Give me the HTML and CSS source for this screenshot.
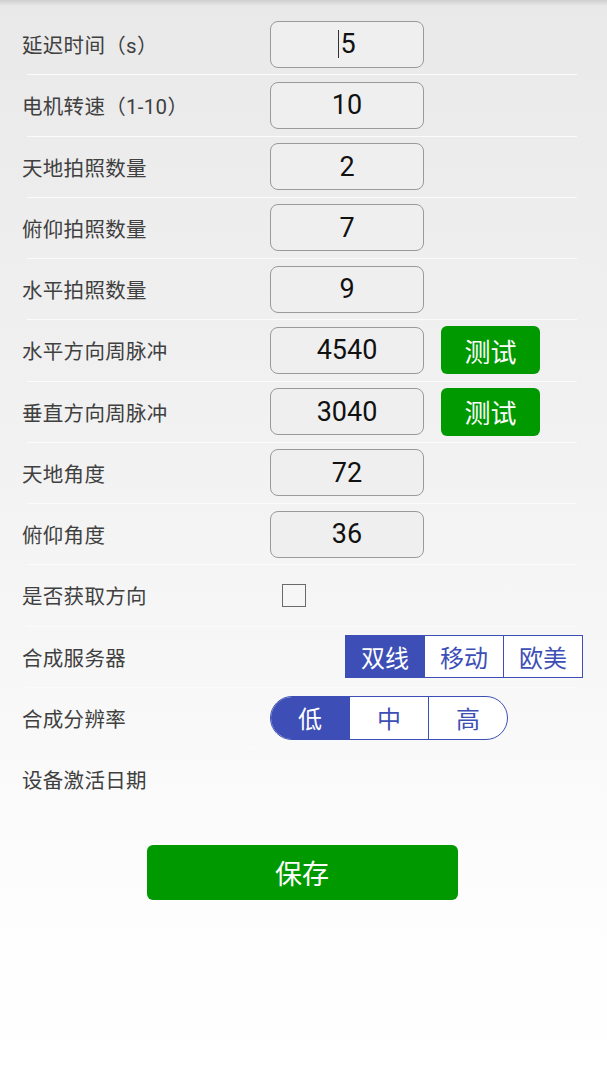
FILE: index.html
```html
<!DOCTYPE html>
<html lang="zh-CN">
<head>
  <meta charset="UTF-8">
  <title>参数设置</title>
  <link rel="stylesheet" href="styles.css">
</head>
<body>
  <div class="top-shadow"></div>

  <!-- 参数列表 -->
  <div class="form">
    <div class="row">
      <span class="label">延迟时间（s）</span>
      <div class="field"><span class="caret"></span>5</div>
    </div>
    <div class="row">
      <span class="label">电机转速（1-10）</span>
      <div class="field">10</div>
    </div>
    <div class="row">
      <span class="label">天地拍照数量</span>
      <div class="field">2</div>
    </div>
    <div class="row">
      <span class="label">俯仰拍照数量</span>
      <div class="field">7</div>
    </div>
    <div class="row">
      <span class="label">水平拍照数量</span>
      <div class="field">9</div>
    </div>
    <div class="row">
      <span class="label">水平方向周脉冲</span>
      <div class="field">4540</div>
      <button class="test-btn">测试</button>
    </div>
    <div class="row">
      <span class="label">垂直方向周脉冲</span>
      <div class="field">3040</div>
      <button class="test-btn">测试</button>
    </div>
    <div class="row">
      <span class="label">天地角度</span>
      <div class="field">72</div>
    </div>
    <div class="row">
      <span class="label">俯仰角度</span>
      <div class="field">36</div>
    </div>
    <div class="row">
      <span class="label">是否获取方向</span>
      <span class="checkbox"></span>
    </div>
    <div class="row">
      <span class="label">合成服务器</span>
      <div class="segmented server">
        <span class="seg active">双线</span>
        <span class="seg">移动</span>
        <span class="seg">欧美</span>
      </div>
    </div>
    <div class="row">
      <span class="label">合成分辨率</span>
      <div class="segmented pill">
        <span class="seg active">低</span>
        <span class="seg">中</span>
        <span class="seg">高</span>
      </div>
    </div>
    <div class="row">
      <span class="label">设备激活日期</span>
    </div>
  </div>

  <div class="actions">
    <button class="save-btn">保存</button>
  </div>
</body>
</html>
```

FILE: styles.css
```css
body {
  margin: 0;
  min-height: 1080px;
  background: linear-gradient(#e9e9e9 0, #f3f3f3 500px, #fdfdfd 900px, #fff 1080px);
  font-family: Roboto, "Noto Sans CJK SC", sans-serif;
  color: #3a3a3a;
  overflow: hidden;
}

.top-shadow {
  height: 6px;
  margin-bottom: 8px;
  background: linear-gradient(#cfcfcf, rgba(233, 233, 233, 0));
}

.form {
  display: flex;
  flex-direction: column;
}

.row {
  display: flex;
  align-items: center;
  height: 60.25px;
  margin-left: 22px;
  position: relative;
}

.row::after {
  content: "";
  position: absolute;
  left: 5px;
  right: 30px;
  bottom: -1px;
  height: 1px;
  background: #fbfbfb;
}

.row + .row {
  margin-top: 1px;
}

.label {
  width: 248px;
  flex-shrink: 0;
  font-size: 20.5px;
  color: #404040;
  text-spacing-trim: space-all;
  letter-spacing: 0.3px;
}

.field {
  flex-shrink: 0;
  width: 152px;
  height: 45px;
  border: 1.5px solid #9a9a9a;
  border-radius: 8px;
  background: #efefef;
  display: flex;
  align-items: center;
  justify-content: center;
  font-size: 27px;
  color: #111;
}

.caret {
  width: 1px;
  height: 28px;
  background: #333;
  margin-right: 1px;
}

.test-btn {
  margin-left: 17px;
  width: 99px;
  height: 48px;
  border: none;
  border-radius: 6px;
  background: #009a00;
  color: #fff;
  font-family: inherit;
  font-size: 26px;
  padding: 0;
}

.checkbox {
  margin-left: 12px;
  width: 22px;
  height: 21px;
  border: 1.5px solid #6a6a6a;
  background: #f6f6f6;
}

.segmented {
  display: flex;
  border: 1.5px solid #3d4fb6;
  background: #fff;
  overflow: hidden;
}

.segmented .seg {
  display: flex;
  align-items: center;
  justify-content: center;
  font-size: 24px;
  color: #3d4fb6;
}

.segmented .seg + .seg {
  border-left: 1.5px solid #3d4fb6;
}

.segmented .seg.active {
  background: #3d4fb6;
  color: #fff;
}

.server {
  margin-left: 75px;
  height: 41px;
}

.server .seg {
  width: 78px;
}

.pill {
  height: 42px;
  border-radius: 22px;
}

.pill .seg {
  width: 78px;
}

.actions {
  display: flex;
  justify-content: center;
  padding: 36px 0 0 0;
}

.save-btn {
  margin-left: -3px;
  width: 311px;
  height: 55px;
  border: none;
  border-radius: 6px;
  background: #009a00;
  color: #fff;
  font-family: inherit;
  font-size: 27px;
}
```
